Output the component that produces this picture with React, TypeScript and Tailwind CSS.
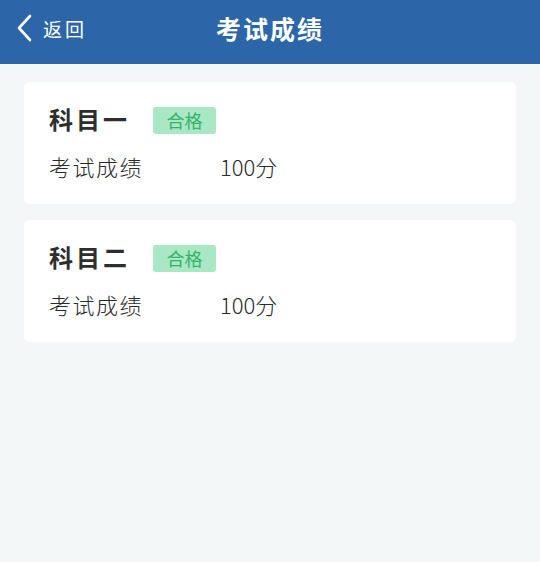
const subjects = [
  { name: "科目一", status: "合格", score: "100分" },
  { name: "科目二", status: "合格", score: "100分" },
];

const font = { fontFamily: '"Noto Sans CJK SC", "Noto Sans", sans-serif' };

export default function App() {
  return (
    <div
      className="w-[540px] h-[562px] bg-[#f4f7f8] text-[#333333]"
      style={font}
    >
      <header className="relative h-16 bg-[#2c66a9] flex items-center justify-center">
        <button className="absolute left-[16px] top-0 h-full flex items-center gap-[9px] text-white -mt-[4px]">
          <svg
            width="18"
            height="28"
            viewBox="0 0 18 28"
            fill="none"
            stroke="currentColor"
            strokeWidth="2.6"
            strokeLinecap="round"
            strokeLinejoin="round"
          >
            <path d="M14 2 L3 14 L14 26" />
          </svg>
          <span className="text-[19px] tracking-[3px] leading-none">返回</span>
        </button>
        <h1 className="text-white text-[25px] font-bold tracking-[2px] -mt-[6px]">
          考试成绩
        </h1>
      </header>

      <main className="px-[24px] pt-[18px] flex flex-col gap-[16px]">
        {subjects.map((s) => (
          <div
            key={s.name}
            className="bg-white rounded-[6px] h-[122px] px-[25px] pt-[18px]"
          >
            <div className="flex items-center h-[38px]">
              <span className="text-[24px] font-bold tracking-[3px] w-[104px] text-[#2e2e2e]">
                {s.name}
              </span>
              <span className="h-[27px] w-[63px] rounded-[3px] bg-[#a9e7c5] text-[#35b46b] text-[18px] flex items-center justify-center mt-[2px]">
                {s.status}
              </span>
            </div>
            <div className="flex items-center mt-[17px] text-[22px] text-[#2a2a2a] font-light leading-none">
              <span className="w-[171px] tracking-[1.5px]">考试成绩</span>
              <span>{s.score}</span>
            </div>
          </div>
        ))}
      </main>
    </div>
  );
}
